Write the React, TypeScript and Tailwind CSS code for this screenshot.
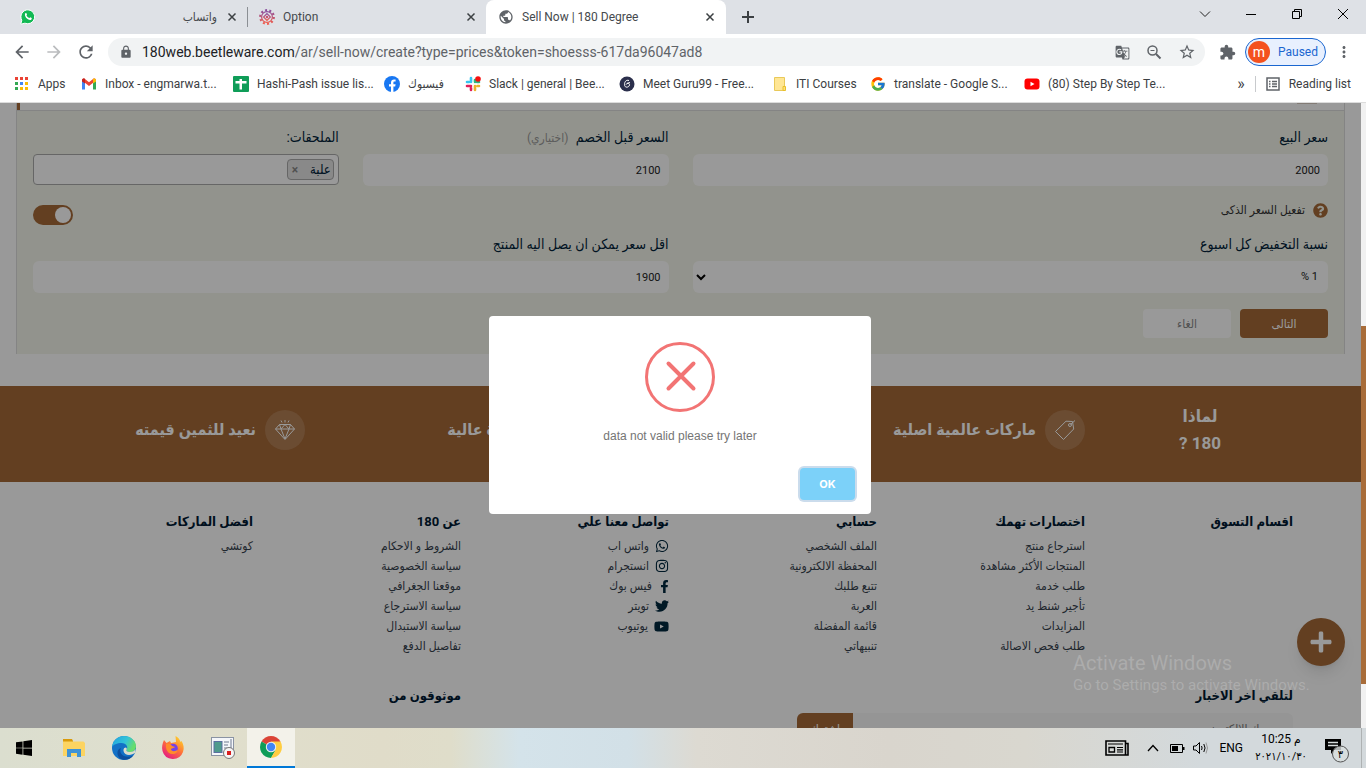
import { useState } from 'react';
import type { ReactNode } from 'react';
import { BsWindows } from 'react-icons/bs';
import {
    FaFacebookF,
    FaInstagram,
    FaPlus,
    FaQuestionCircle,
    FaTwitter,
    FaWhatsapp,
    FaYoutube,
} from 'react-icons/fa';
import { FcGoogle } from 'react-icons/fc';
import {
    MdArrowBack,
    MdArrowForward,
    MdExtension,
    MdGTranslate,
    MdLock,
    MdMoreVert,
    MdPublic,
    MdRefresh,
    MdStarBorder,
} from 'react-icons/md';

const WhatsappLogo = () => (
    <svg width="16" height="16" viewBox="0 0 16 16">
        <path
            d="M8 0.8a7 7 0 0 0-6.2 10.4L0.8 15.2l4.1-1A7 7 0 1 0 8 0.8z"
            fill="#12b954"
            stroke="#fff"
        />
        <path
            d="M5.3 4.2c.5-.4.9-.3 1.1.1l.6 1.3c.1.3-.5.8-.5 1 .5 1.1 1.5 2 2.7 2.5.3 0 .8-.9 1.1-.8l1.3.7c.5.3 0 1.6-.8 1.9-2.7.8-7.2-3.7-5.5-6.7z"
            fill="#fff"
        />
    </svg>
);

const OptionLogo = () => (
    <svg width="16" height="16" viewBox="0 0 16 16" fill="none">
        <defs>
            <linearGradient id="gear" x1="0" y1="0" x2="0" y2="1">
                <stop offset="0" stopColor="#8a4f9e" />
                <stop offset="1" stopColor="#ef5b4c" />
            </linearGradient>
        </defs>
        <circle
            cx="8"
            cy="8"
            r="6.8"
            stroke="url(#gear)"
            strokeWidth="2.2"
            strokeDasharray="2 2.27"
        />
        <circle cx="8" cy="8" r="5.4" stroke="url(#gear)" strokeWidth="1.2" />
        <path d="M8 4.6L11.4 8 8 11.4 4.600 8z" stroke="url(#gear)" strokeWidth="1.2" />
        <circle cx="8" cy="8" r="1.2" fill="#c9506f" />
    </svg>
);

const AppsIcon = () => {
    const fills = [
        '#ea4335', '#ea4335', '#ea4335',
        '#34a853', '#4285f4', '#fbbc05',
        '#34a853', '#fbbc05', '#fbbc05',
    ];
    return (
        <svg width="16" height="14" viewBox="0 0 16 14">
            {fills.map((fill, i) => (
                <rect
                    key={i}
                    x={1 + (i % 3) * 5}
                    y={Math.floor(i / 3) * 5}
                    width="3"
                    height="3"
                    fill={fill}
                />
            ))}
        </svg>
    );
};

const GmailLogo = () => (
    <svg width="16" height="16" viewBox="0 0 16 16">
        <path d="M1 4.5v9h3V7z" fill="#4285f4" />
        <path d="M15 4.5v9h-3V7z" fill="#34a853" />
        <path d="M1 4.5C1 2.5 3 2 4 3l4 3.200L12 3c1-1 3-.5 3 1.5L8 10z" fill="#ea4335" />
        <path d="M12 3c1-1 3-.5 3 1.5v1L12 7.5z" fill="#fbbc05" />
        <path d="M4 3C3 2 1 2.5 1 4.5v1l3 2z" fill="#c5221f" />
    </svg>
);

const SheetsLogo = () => (
    <svg width="16" height="16" viewBox="0 0 16 16">
        <rect width="16" height="16" rx="1" fill="#0f9d58" />
        <path d="M2.500 5h11v2.5H9V13.500H6.500V7.500h-4z" fill="#fff" />
        <path d="M6.500 3H9v3H6.500z" fill="#fff" />
    </svg>
);

const FacebookLogo = () => (
    <svg width="16" height="16" viewBox="0 0 16 16">
        <circle cx="8" cy="8" r="8" fill="#1877f2" />
        <path
            d="M7 16v-5.5H5V8.200h2V6.500c0-2 1.200-3.100 3-3.100l1.600.1v2h-1c-1 0-1.200.5-1.200 1.200v1.500h2.200l-.4 2.300H9.400V16z"
            fill="#fff"
        />
    </svg>
);

const SlackLogo = () => (
    <svg width="16" height="16" viewBox="0 0 16 16" strokeWidth="2.6" strokeLinecap="round">
        <path d="M6 2v4M2 6h2" stroke="#36c5f0" />
        <path d="M10 6V4M12 6h2" stroke="#2eb67d" />
        <path d="M10 10v4M12.5 10H14" stroke="#ecb22e" />
        <path d="M2 10h4M6 12v2" stroke="#e01e5a" />
        <circle cx="13" cy="3" r="2.8" fill="#f60f0f" />
    </svg>
);

const GuruLogo = () => (
    <svg width="16" height="16" viewBox="0 0 16 16">
        <circle cx="8" cy="8" r="7.500" fill="#2b2f4c" />
        <path
            d="M10 4.500C7 3.500 5.500 6 5.500 8.500c0 4 5 3 5 .3 0-2-3-2.200-3.500 0M8 7.500l3-1"
            fill="none"
            stroke="#fff"
        />
    </svg>
);

const FolderIcon = () => (
    <svg width="16" height="16" viewBox="0 0 16 16">
        <path d="M2.500 1.500h10v13h-10z" fill="#ffe694" stroke="#e9c95a" />
        <path d="M11 10.500h2.500v4H11z" fill="#ffe07a" stroke="#e9c02a" />
    </svg>
);

const YoutubeLogo = () => (
    <svg width="16" height="16" viewBox="0 0 16 16">
        <rect x="0.5" y="2.5" width="15" height="11" rx="3" fill="#f00" />
        <path d="M6.500 5.800v4.400L10.500 8z" fill="#fff" />
    </svg>
);

const ReadingListIcon = () => (
    <svg width="14" height="14" viewBox="0 0 14 14" fill="none" stroke="#5f6368">
        <rect x="1" y="1" width="12" height="12" strokeWidth="1.5" />
        <path
            d="M3 4.500h1.500M3 7h1.500M3 9.500h1.500M6 4.500h5M6 7h5M6 9.500h5"
            strokeWidth="1.300"
        />
    </svg>
);

const ZoomOutIcon = () => (
    <svg width="16" height="16" viewBox="0 0 16 16" fill="none" stroke="#5f6368">
        <circle cx="6.5" cy="6.500" r="4.500" strokeWidth="1.500" />
        <path d="M10 10l4.500 4.500" strokeWidth="2" />
        <path d="M4.500 6.500h4" />
    </svg>
);

const CloseIcon = () => (
    <svg width="14" height="14" viewBox="0 0 14 14" stroke="#3c4043" strokeWidth="1.500">
        <path d="M3.500 3.500l7 7M10.500 3.500l-7 7" />
    </svg>
);

const tabs = [
    { title: 'واتساب', icon: <WhatsappLogo />, rtl: true },
    { title: 'Option', icon: <OptionLogo />, rtl: false },
];

const bookmarks: { label: string; icon: ReactNode; width: string }[] = [
    { label: 'Apps', icon: <AppsIcon />, width: 'w-[67px]' },
    { label: 'Inbox - engmarwa.t...', icon: <GmailLogo />, width: 'w-[152px]' },
    { label: 'Hashi-Pash issue lis...', icon: <SheetsLogo />, width: 'w-[151px]' },
    { label: 'فيسبوك', icon: <FacebookLogo />, width: 'w-[81px]' },
    { label: 'Slack | general | Bee...', icon: <SlackLogo />, width: 'w-[154px]' },
    { label: 'Meet Guru99 - Free...', icon: <GuruLogo />, width: 'w-[153px]' },
    { label: 'ITI Courses', icon: <FolderIcon />, width: 'w-[98px]' },
    { label: 'translate - Google S...', icon: <FcGoogle size={16} />, width: 'w-[154px]' },
    { label: '(80) Step By Step Te...', icon: <YoutubeLogo />, width: 'w-[160px]' },
];

const footerColumns = [
    { title: 'اقسام التسوق', links: [] },
    {
        title: 'اختصارات تهمك',
        links: [
            'استرجاع منتج',
            'المنتجات الأكثر مشاهدة',
            'طلب خدمة',
            'تأجير شنط يد',
            'المزايدات',
            'طلب فحص الاصالة',
        ],
    },
    {
        title: 'حسابي',
        links: [
            'الملف الشخصي',
            'المحفظة الالكترونية',
            'تتبع طلبك',
            'العربة',
            'قائمة المفضلة',
            'تنبيهاتي',
        ],
    },
    {
        title: 'تواصل معنا علي',
        links: ['واتس اب', 'انستجرام', 'فيس بوك', 'تويتر', 'يوتيوب'],
        icons: [
            <FaWhatsapp size={14} />,
            <FaInstagram size={14} />,
            <FaFacebookF size={13} className="-mr-[2px]" />,
            <FaTwitter size={14} />,
            <FaYoutube size={15} />,
        ],
    },
    {
        title: 'عن 180',
        links: [
            'الشروط و الاحكام',
            'سياسة الخصوصية',
            'موقعنا الجغرافي',
            'سياسة الاسترجاع',
            'سياسة الاستبدال',
            'تفاصيل الدفع',
        ],
    },
    { title: 'افضل الماركات', links: ['كوتشي'] },
];

function TabStrip() {
    return (
        <div className="flex h-[34px] bg-[#dee1e6] text-xs text-[#45494d]">
            {tabs.map((tab, i) => (
                <div
                    key={tab.title}
                    className={
                        i === 0
                            ? 'flex w-[248px] items-center pl-5 pr-[10px]'
                            : 'flex w-[238px] items-center pl-[11px] pr-2'
                    }
                >
                    {tab.icon}
                    <button
                        dir={tab.rtl ? 'rtl' : 'ltr'}
                        className="mx-2 flex-1 text-start"
                    >
                        {tab.title}
                    </button>
                    <button aria-label="Close tab">
                        <CloseIcon />
                    </button>
                    {i === 0 && <span className="-mr-[10px] ml-2 h-5 w-px bg-[#8b8f94]" />}
                </div>
            ))}
            <div className="flex w-60 items-center rounded-t-lg bg-white pl-3 pr-[9px]">
                <MdPublic size={16} className="text-[#5f6368]" />
                <button className="mx-2 flex-1 text-start">Sell Now | 180 Degree</button>
                <button aria-label="Close tab">
                    <CloseIcon />
                </button>
            </div>
            <button aria-label="New tab" className="ml-4">
                <svg width="12" height="12" viewBox="0 0 12 12" stroke="#3c4043" strokeWidth="2">
                    <path d="M6 0v12M0 6h12" />
                </svg>
            </button>
            <div className="ml-auto flex items-center gap-[34px] pb-[6px] pr-[17px]">
                <button aria-label="Search tabs">
                    <svg width="12" height="12" viewBox="0 0 12 12" fill="none" stroke="#222">
                        <path d="M1 3.500l5 5 5-5" />
                    </svg>
                </button>
                <button aria-label="Minimize">
                    <svg width="12" height="12" viewBox="0 0 12 12" stroke="#000">
                        <path d="M1 6.500h10" />
                    </svg>
                </button>
                <button aria-label="Restore">
                    <svg width="12" height="12" viewBox="0 0 12 12" fill="none" stroke="#000">
                        <path d="M1.500 3.500h7v7h-7zM3.500 3.500v-2h7v7h-2" />
                    </svg>
                </button>
                <button aria-label="Close window">
                    <svg width="12" height="12" viewBox="0 0 12 12" stroke="#000">
                        <path d="M1 1l10 10M11 1L1 11" />
                    </svg>
                </button>
            </div>
        </div>
    );
}

function Toolbar() {
    return (
        <div className="flex h-9 items-center bg-white pr-[13px] text-[#5f6368]">
            <div className="flex w-[108px] items-center gap-3 pl-3">
                <button aria-label="Back">
                    <MdArrowBack size={20} />
                </button>
                <button aria-label="Forward" className="text-[#babcbe]">
                    <MdArrowForward size={20} />
                </button>
                <button aria-label="Reload">
                    <MdRefresh size={20} />
                </button>
            </div>
            <label className="flex h-7 flex-1 items-center rounded-full bg-[#f1f3f4] pl-[11px] pr-[9px] text-sm">
                <MdLock size={14} className="mr-[9px]" />
                <span className="text-[#202124]">180web.beetleware.com</span>
                <input
                    aria-label="Address"
                    className="min-w-0 flex-1 bg-transparent outline-none"
                    defaultValue="/ar/sell-now/create?type=prices&token=shoesss-617da96047ad8"
                />
                <span className="flex items-center gap-4">
                    <MdGTranslate size={15} />
                    <ZoomOutIcon />
                    <MdStarBorder size={18} />
                </span>
            </label>
            <MdExtension size={17} className="ml-[14px]" />
            <button className="ml-[9px] flex h-7 w-[81px] items-center gap-2 rounded-full border border-[#1a66d0] bg-[#e8f0fe] pl-[2px] text-xs text-[#1a66d0]">
                <span className="flex size-[22px] items-center justify-center rounded-full bg-[#f4511e] text-sm text-white">
                    m
                </span>
                Paused
            </button>
            <button aria-label="Menu" className="pl-[9px]">
                <MdMoreVert size={18} />
            </button>
        </div>
    );
}

function BookmarksBar() {
    return (
        <div className="flex h-[33px] items-center border-b border-[#dcdcdc] bg-white pb-1 pl-[14px] pr-[15px] text-xs text-[#3c4043]">
            {bookmarks.map((bookmark) => (
                <a
                    key={bookmark.label}
                    href="#"
                    className={`flex shrink-0 items-center gap-2 whitespace-nowrap ${bookmark.width}`}
                >
                    <span className="shrink-0">{bookmark.icon}</span>
                    {bookmark.label}
                </a>
            ))}
            <button className="ml-auto text-base">»</button>
            <button className="ml-[10px] flex h-4 items-center gap-[9px] whitespace-nowrap border-l border-[#c8cacd] pl-[10px]">
                <ReadingListIcon />
                Reading list
            </button>
        </div>
    );
}

const fieldClass =
    'h-8 w-full rounded-md bg-white px-2 text-[11px] text-[#222] outline-none';
const labelClass = 'mb-[7px] block h-5 text-sm leading-5 text-[#00223a]';

function PriceForm() {
    const [smartPrice, setSmartPrice] = useState(true);

    return (
        <form className="mx-4 border-x border-[#dcdcdc]">
            <div className="flex h-2 justify-between border-b border-[#dcdcdc] pr-[27px]">
                <div className="h-px w-5 bg-[#d9cec4]" />
                <div className="w-[3px] bg-[#a56937]" />
            </div>
            <div className="bg-[#f4f6eb] p-4">
                <div className="grid grid-cols-4 gap-x-6">
                    <div className="col-span-2">
                        <label htmlFor="price" className={labelClass}>
                            سعر البيع
                        </label>
                        <input id="price" defaultValue="2000" className={fieldClass} />
                    </div>
                    <div>
                        <label htmlFor="oldPrice" className={labelClass}>
                            السعر قبل الخصم{' '}
                            <span className="mr-1 text-xs text-[#9a9a9a]">(اختياري)</span>
                        </label>
                        <input id="oldPrice" defaultValue="2100" className={fieldClass} />
                    </div>
                    <div>
                        <label htmlFor="accessories" className={labelClass}>
                            الملحقات:
                        </label>
                        <div className="flex h-[31px] items-center rounded-sm border border-[#aaa] bg-white px-1">
                            <span className="flex h-[21px] items-center gap-3 whitespace-nowrap rounded-sm border border-[#aaa] bg-[#e4e4e4] pl-1 pr-[2px] text-[13px] text-[#00223a]">
                                علبة
                                <button type="button" className="text-xs font-bold text-[#888]">
                                    ×
                                </button>
                            </span>
                            <input id="accessories" className="min-w-0 flex-1 outline-none" />
                        </div>
                    </div>
                </div>

                <div className="mt-[15px] flex h-6 justify-between">
                    <label
                        htmlFor="smartPrice"
                        className="flex h-[18px] items-center gap-2 text-xs text-[#333]"
                    >
                        <FaQuestionCircle size={15} className="text-[#a56937]" />
                        تفعيل السعر الذكى
                    </label>
                    <span className="flex h-5 w-10 self-end rounded-full bg-[#a56937]">
                        <input
                            id="smartPrice"
                            type="checkbox"
                            checked={smartPrice}
                            onChange={(e) => setSmartPrice(e.target.checked)}
                            className="m-[2px] size-4 appearance-none rounded-full bg-white"
                        />
                    </span>
                </div>

                <div className="mt-[9px] grid grid-cols-2 gap-x-6">
                    <div>
                        <label htmlFor="discount" className={labelClass}>
                            نسبة التخفيض كل اسبوع
                        </label>
                        <div className="relative">
                            <select
                                id="discount"
                                className="h-8 w-full appearance-none rounded-md bg-white px-[10px] text-[11px] text-[#222]"
                            >
                                <option>1 %</option>
                            </select>
                            <svg
                                width="10"
                                height="7"
                                viewBox="0 0 10 7"
                                fill="none"
                                stroke="#000"
                                strokeWidth="2"
                                className="pointer-events-none absolute left-[3px] top-[13px]"
                            >
                                <path d="M1 1l4 4 4-4" />
                            </svg>
                        </div>
                    </div>
                    <div>
                        <label htmlFor="minPrice" className={labelClass}>
                            اقل سعر يمكن ان يصل اليه المنتج
                        </label>
                        <input id="minPrice" defaultValue="1900" className={fieldClass} />
                    </div>
                </div>

                <div className="mt-4 flex gap-[9px] text-xs">
                    <button
                        type="button"
                        className="h-[29px] w-[88px] rounded-sm bg-[#a56937] text-white"
                    >
                        التالى
                    </button>
                    <button
                        type="button"
                        className="h-[29px] w-[88px] rounded-sm bg-white text-[#888]"
                    >
                        الغاء
                    </button>
                </div>
            </div>
        </form>
    );
}

function Feature({ icon, children }: { icon: ReactNode; children: ReactNode }) {
    return (
        <div className="flex items-center gap-[9px] whitespace-nowrap text-base font-bold">
            <span className="flex size-10 shrink-0 items-center justify-center rounded-full bg-white/15">
                {icon}
            </span>
            {children}
        </div>
    );
}

const TagIcon = () => (
    <svg width="20" height="20" viewBox="0 0 20 20" fill="none" stroke="#fff">
        <path d="M0.500 11.500L11 1.200l6.500.3 1.200 7.500L8.500 19.500z" />
        <circle cx="15" cy="5" r="1.500" />
        <path d="M15.500 4.500L20 0.500" />
    </svg>
);

const DiamondIcon = () => (
    <svg width="20" height="20" viewBox="0 0 20 20" fill="none" stroke="#fff">
        <path d="M4.500 4.500h11l4 4.500L10 19.500 0.500 9z" />
        <path d="M0.500 9h19M6 9l4 10 4-10M4.500 4.500L6 9l4-4.500L14 9l1.500-4.500M10 0v2.500M6 0.500l1 2M14 0.500l-1 2" />
    </svg>
);

const MedalIcon = () => (
    <svg width="20" height="20" viewBox="0 0 20 20" fill="none" stroke="#fff">
        <circle cx="10" cy="7.500" r="6" />
        <path d="M6 12v7.500l4-2.500 4 2.500V12" />
    </svg>
);

function WhyBand() {
    return (
        <section className="mt-8 grid h-24 grid-cols-[230fr_390fr_390fr_305fr] items-center bg-[#a56937] pb-2 pr-[46px] text-white">
            <h2 className="text-center text-[17px] font-bold leading-[27px]">
                لماذا
                <br />
                180 ?
            </h2>
            <Feature icon={<TagIcon />}>ماركات عالمية اصلية</Feature>
            <Feature icon={<MedalIcon />}>نقدم منتجات ذات جودة عالية</Feature>
            <Feature icon={<DiamondIcon />}>نعيد للثمين قيمته</Feature>
        </section>
    );
}

const headingClass = 'text-[13px] font-bold leading-6 text-[#001a33]';

function SiteFooter() {
    return (
        <footer className="pl-[45px] pr-[68px] pt-7 text-xs text-[#36424e]">
            <div className="grid grid-cols-6">
                {footerColumns.map((column) => (
                    <div key={column.title} className="h-[148px] whitespace-nowrap">
                        <h3 className={`mb-[2px] ${headingClass}`}>{column.title}</h3>
                        <ul className="leading-5">
                            {column.links.map((link, i) => (
                                <li key={link}>
                                    <a href="#" className="flex items-center gap-[6px]">
                                        {column.icons && (
                                            <span className="text-[#00283f]">
                                                {column.icons[i]}
                                            </span>
                                        )}
                                        {link}
                                    </a>
                                </li>
                            ))}
                        </ul>
                    </div>
                ))}
            </div>
            <div className="mt-[26px] grid grid-cols-6">
                <div className="col-span-4">
                    <h3 className={headingClass}>لتلقي اخر الاخبار</h3>
                    <div className="mt-[5px] flex h-8 w-[496px]">
                        <input
                            aria-label="البريد الالكتروني"
                            placeholder="بريدك الالكتروني"
                            className="min-w-0 flex-1 rounded-r-md bg-[#f8f8f8] px-4 placeholder:text-[#777]"
                        />
                        <button className="w-14 rounded-l-md bg-[#a56937] text-white">
                            اشترك
                        </button>
                    </div>
                </div>
                <h3 className={`col-span-2 ${headingClass}`}>موثوقون من</h3>
            </div>
        </footer>
    );
}

function ErrorDialog() {
    return (
        <div className="absolute inset-0 flex items-center justify-center bg-black/40 pb-px pr-px">
            <div
                role="alertdialog"
                aria-describedby="dialogText"
                dir="ltr"
                className="flex w-[382px] flex-col items-center rounded bg-white px-4 pb-[14px] pt-[26px]"
            >
                <svg
                    width="70"
                    height="70"
                    viewBox="0 0 70 70"
                    fill="none"
                    stroke="#f27474"
                    strokeLinecap="round"
                >
                    <circle cx="35" cy="35" r="33.500" strokeWidth="3" />
                    <path d="M23.500 21.500L48.500 46.500M48.500 21.500L23.500 46.500" strokeWidth="4" />
                </svg>
                <p
                    id="dialogText"
                    className="mt-[14px] font-['Liberation_Sans'] text-xs leading-5 text-[#757575]"
                >
                    data not valid please try later
                </p>
                <button className="mt-[22px] h-8 w-[55px] self-end rounded bg-[#7cd1f9] font-['Inter'] text-[11px] font-bold text-white ring-2 ring-[#cbdcec]">
                    OK
                </button>
            </div>
        </div>
    );
}

function Taskbar() {
    return (
        <div className="flex h-10 shrink-0 items-center bg-[linear-gradient(90deg,#dbdecf_0%,#e0dfcd_15%,#e0dcc9_28%,#dfddca_33%,#d4e3ea_38%,#d2e0e7_46%,#dddad2_51%,#d9d5cd_65%,#d9d7cf_75%,#d3d9dc_88%,#d3d9dc_100%)] text-xs text-black">
            <button aria-label="Start" className="flex w-12 justify-center">
                <BsWindows size={16} />
            </button>
            <button aria-label="File Explorer" className="flex w-[52px] justify-center">
                <svg width="22" height="20" viewBox="0 0 22 20">
                    <path d="M0 1h9l1 2v3H0z" fill="#d99a0b" />
                    <path d="M0 3.500h20.500L22 5v13H0z" fill="#fcd462" />
                    <path d="M4 11h14v8h-4v-4H8v4H4z" fill="#3f93d6" />
                </svg>
            </button>
            <button aria-label="Edge" className="flex w-12 justify-center">
                <svg width="24" height="24" viewBox="0 0 24 24">
                    <defs>
                        <linearGradient id="edgeTop" x1="0" y1="0" x2="1" y2="0.400">
                            <stop offset="0" stopColor="#1fa2e0" />
                            <stop offset="0.600" stopColor="#33c3d8" />
                            <stop offset="1" stopColor="#66dd6c" />
                        </linearGradient>
                    </defs>
                    <circle cx="12" cy="12" r="12" fill="#1371c6" />
                    <path
                        d="M0 11C1 4 6 0 12 0c7 0 12 5 12 10 0 4-3 6-6 6-3 0-4-1.200-3.500-2 2-3 0-7-5-7C5 7 1 9 0 11z"
                        fill="url(#edgeTop)"
                    />
                    <path d="M9 12c-3 6 4 11 12 7.500C18 24 12 25 8 22.500 4 19 5 13 9 12z" fill="#0d4f9e" />
                    <path
                        d="M14.500 14c-.5.800.5 2 3.500 2 2.500 0 4.500-1 5.500-3v3.500c-4 3.500-11 3.500-12-1.500-.3-2.500 1-3.500 2.500-3.500.8.500 1 1.500.5 2.500z"
                        fill="#dcddcc"
                    />
                </svg>
            </button>
            <button aria-label="Firefox" className="flex w-[50px] justify-center">
                <svg width="24" height="24" viewBox="0 0 24 24">
                    <defs>
                        <linearGradient id="fox" x1="0.900" y1="0" x2="0.200" y2="1">
                            <stop offset="0" stopColor="#ffe226" />
                            <stop offset="0.500" stopColor="#ff7139" />
                            <stop offset="1" stopColor="#e31587" />
                        </linearGradient>
                    </defs>
                    <path
                        d="M3 4l2.500 3L9 5l1 2 5-1-.5-6c3 1.500 4.500 4 5 6l1-1c2 3 3 7 1.500 11a10.800 10.800 0 0 1-20.500-1C.5 11 1.500 7 3 4z"
                        fill="url(#fox)"
                    />
                    <circle cx="12" cy="12.500" r="4.800" fill="#7542e5" />
                    <path d="M5 8c3-1 5 0 6 2l3 1c-1 1.500-4 1-4 2.500 1 2.500 5 2 6.500 0 .5 3-2.500 5-5.500 4.500-4-.5-6.500-4-6-10z" fill="#ff8b2b" />
                </svg>
            </button>
            <button aria-label="Recorder" className="flex w-[49px] justify-center">
                <svg width="24" height="22" viewBox="0 0 24 22">
                    <rect x="0.500" y="0.500" width="22" height="18" fill="#f4f6fa" stroke="#8a93a3" />
                    <rect x="3" y="4.500" width="8" height="11" fill="#4f9a8c" stroke="#5a6fa0" />
                    <path d="M13 5h5M13 8h4M13 11h3M20 2v12" stroke="#9aa4b4" strokeWidth="1.500" />
                    <circle cx="18" cy="16" r="5.500" fill="#f5f5f5" stroke="#777" />
                    <rect x="16" y="14" width="4" height="4" fill="#d81e1e" />
                </svg>
            </button>
            <button
                aria-label="Chrome"
                className="flex h-10 w-12 items-center justify-center border-b-2 border-[#0078d7] bg-[#f3f2ea]"
            >
                <svg width="22" height="22" viewBox="0 0 22 22">
                    <path d="M11 11L1.500 5.500a11 11 0 0 1 19 0z" fill="#db4437" />
                    <path d="M11 11L1.500 5.500A11 11 0 0 0 11 22l4.800-8.200z" fill="#0f9d58" />
                    <path d="M11 5.500h9.500A11 11 0 0 1 11 22l4.800-8.200z" fill="#ffcd40" />
                    <circle cx="11" cy="11" r="5.200" fill="#f1f1f1" />
                    <circle cx="11" cy="11" r="4.200" fill="#4285f4" />
                </svg>
            </button>
            <div className="ml-auto flex h-10 items-center">
                <svg width="24" height="16" viewBox="0 0 24 16" fill="none" stroke="#000">
                    <path d="M1 1h19.500v14H1zM20.500 3.500H23V15h-3" strokeWidth="1.600" />
                    <path d="M3 4h15M12 7.500h6M12 9.800h6M12 12h6" strokeWidth="1.200" />
                    <path d="M4 7.500h5.500V12H4z" strokeWidth="1.300" />
                </svg>
                <svg
                    width="12"
                    height="8"
                    viewBox="0 0 12 8"
                    fill="none"
                    stroke="#000"
                    strokeWidth="1.300"
                    className="ml-[18px]"
                >
                    <path d="M1 7l5-5.500L11 7" />
                </svg>
                <svg
                    width="15"
                    height="9"
                    viewBox="0 0 15 9"
                    fill="none"
                    stroke="#000"
                    className="ml-[11px]"
                >
                    <path d="M0.500 0.500h12v8h-12z" />
                    <path d="M2 2h6v5H2zM13 3h1.500v3H13z" fill="#000" stroke="none" />
                </svg>
                <svg
                    width="16"
                    height="14"
                    viewBox="0 0 16 14"
                    fill="none"
                    stroke="#000"
                    className="ml-2"
                >
                    <path d="M0.500 5h2.500L6.500 1.500v11L3 9H0.500z" />
                    <path d="M8.500 5q1.200 2 0 4M10.800 3q2.500 4 0 8" />
                    <path d="M13 1.500q3 5.500 0 11" stroke="#999" />
                </svg>
                <span className="ml-[10px]">ENG</span>
                <div className="ml-[10px] flex w-[56px] flex-col items-center whitespace-nowrap leading-[18px]">
                    <span>10:25 م</span>
                    <span className="text-[11px]">٢٠٢١/١٠/٣٠</span>
                </div>
                <svg width="26" height="26" viewBox="0 0 26 26" className="ml-4 mt-[6px]">
                    <path d="M0 1h16v11H9l-3 4v-4H0z" />
                    <path d="M3 4.500h10M3 7.500h10" stroke="#d8dddd" strokeWidth="1.300" />
                    <circle cx="15.500" cy="16" r="8" fill="#d8dddd" fillOpacity="0.800" stroke="#555" />
                    <text x="15.500" y="20" fontSize="11" textAnchor="middle">
                        ٣
                    </text>
                </svg>
                <span className="ml-[10px] h-10 w-[5px] border-l border-[#aeb2b3]" />
            </div>
        </div>
    );
}

export default function App() {
    return (
        <div className="flex h-screen flex-col overflow-hidden font-['Roboto','DejaVu_Sans_Condensed','DejaVu_Sans',sans-serif]">
            <header className="shrink-0">
                <TabStrip />
                <Toolbar />
                <BookmarksBar />
            </header>
            <div className="flex min-h-0 flex-1">
                <div className="relative min-w-0 flex-1 overflow-hidden bg-white">
                    <main dir="rtl">
                        <PriceForm />
                        <WhyBand />
                        <SiteFooter />
                    </main>
                    <button
                        aria-label="Add"
                        className="absolute bottom-[62px] right-4 flex size-12 items-center justify-center rounded-full bg-[#a56937] text-white shadow-lg"
                    >
                        <FaPlus size={24} />
                    </button>
                    <ErrorDialog />
                    <div className="pointer-events-none absolute bottom-[33px] right-14 w-[232px] whitespace-nowrap text-white/20">
                        <p className="text-xl leading-6">Activate Windows</p>
                        <p className="text-[15px] leading-5">Go to Settings to activate Windows.</p>
                    </div>
                </div>
                <div className="w-[5px] bg-[#f1f1f1] pt-[223px]">
                    <div className="h-[358px] bg-[#a86c39]" />
                </div>
            </div>
            <Taskbar />
        </div>
    );
}
